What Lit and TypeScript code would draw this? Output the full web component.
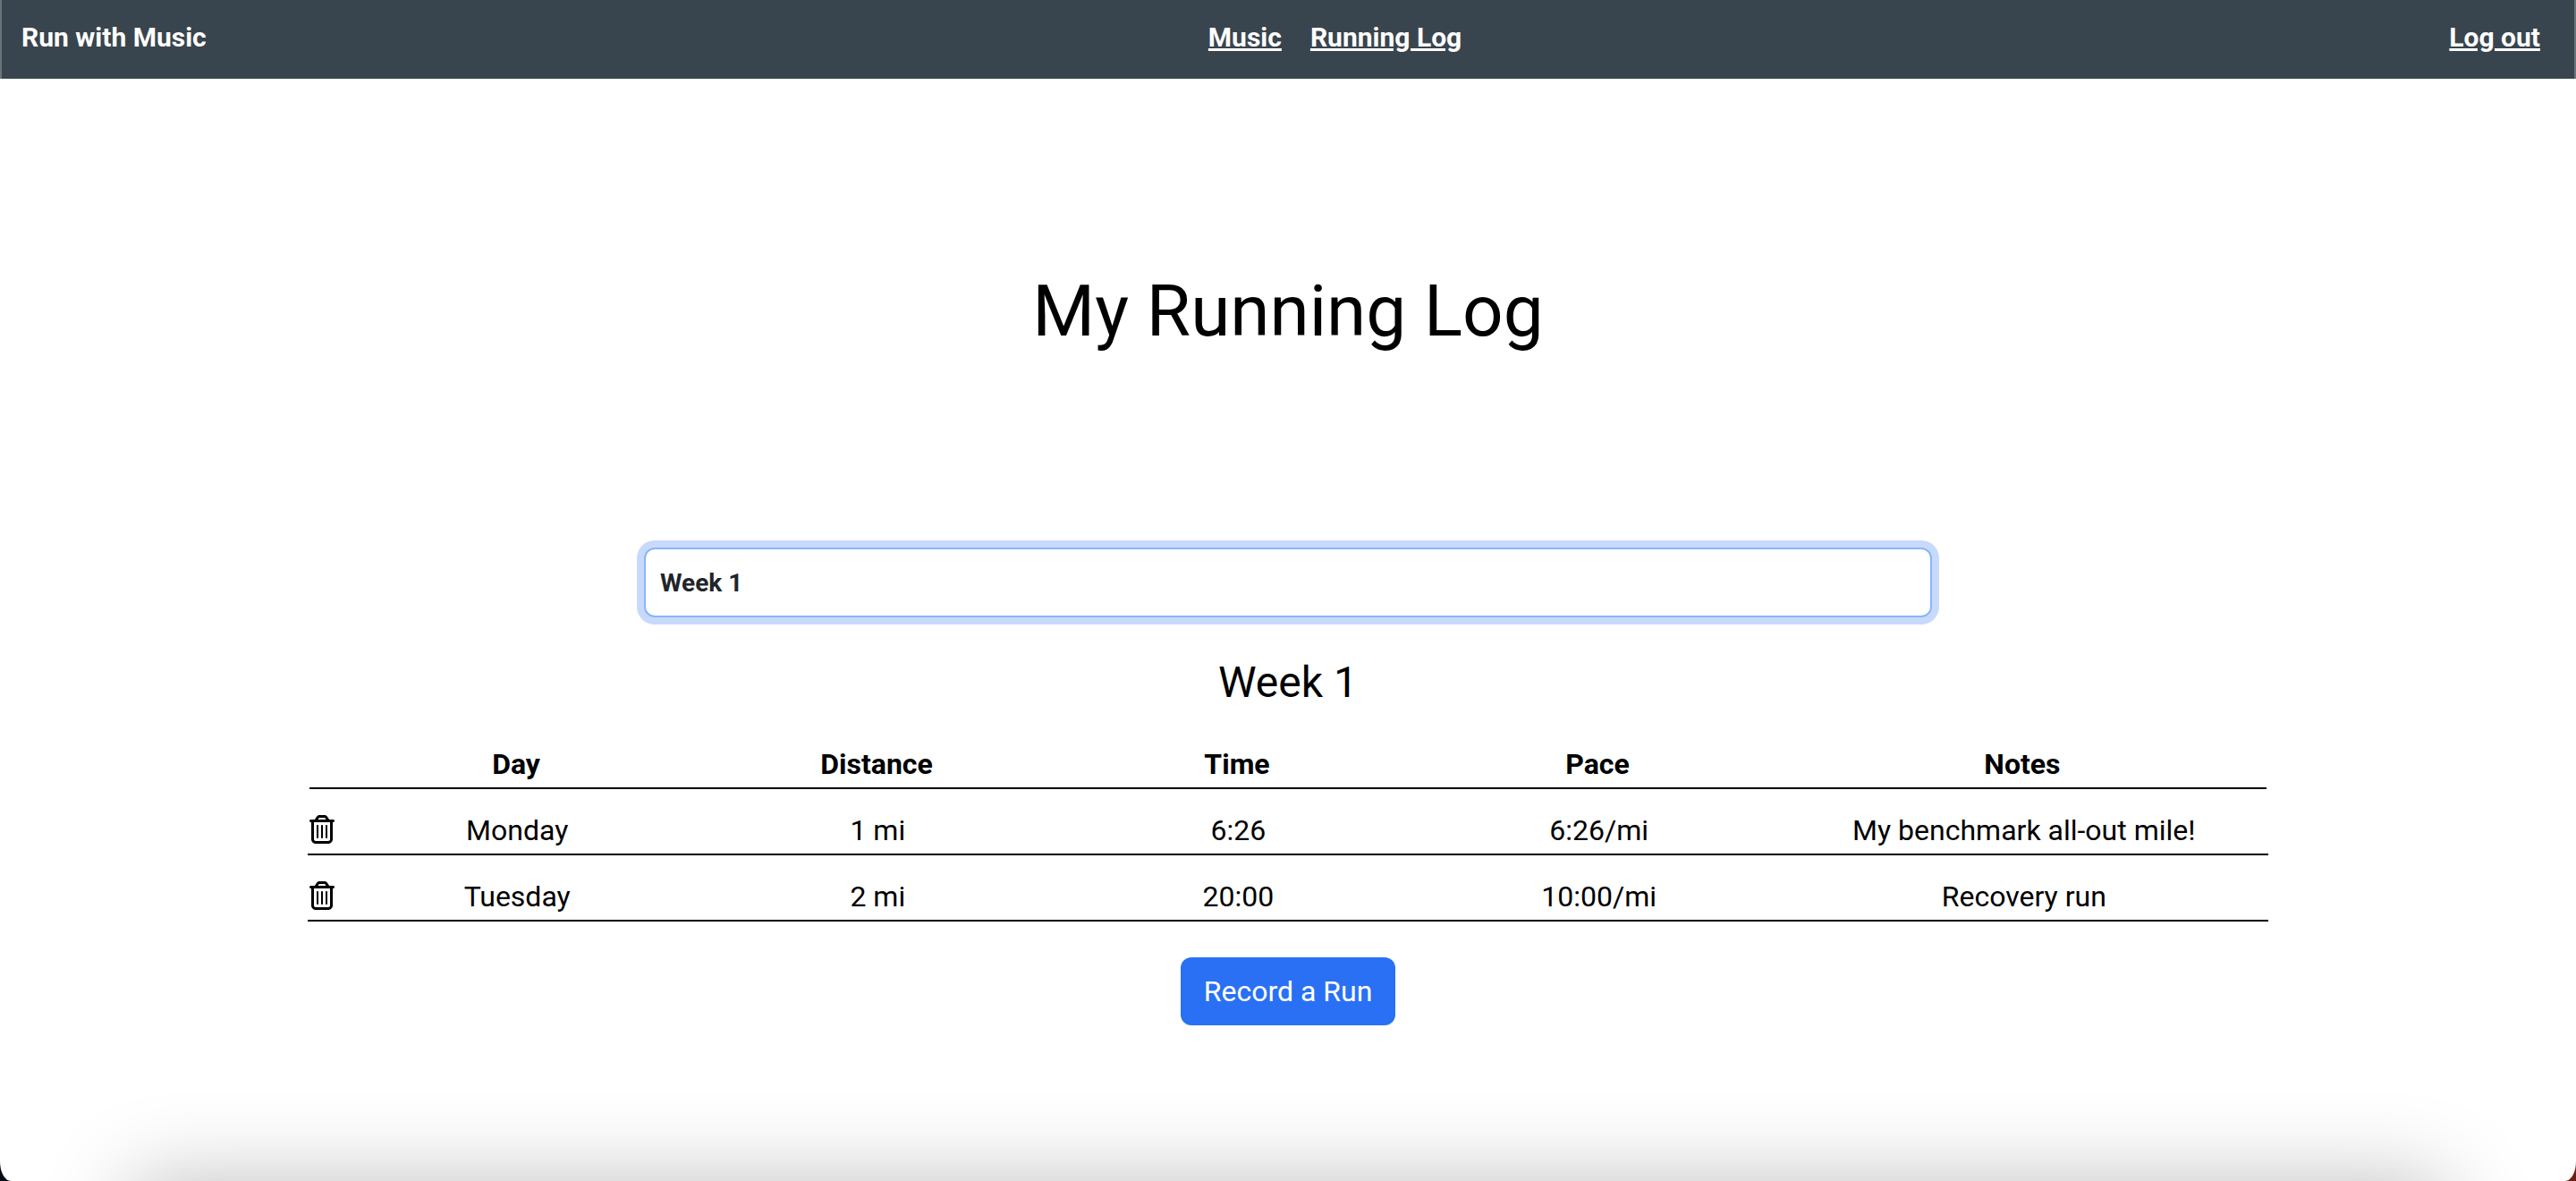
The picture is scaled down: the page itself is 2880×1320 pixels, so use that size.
import { LitElement, html, css } from "lit";
import { customElement, state } from "lit/decorators.js";

interface Run {
  day: string;
  distance: string;
  time: string;
  pace: string;
  notes: string;
}

@customElement("app-header")
class AppHeader extends LitElement {
  static styles = css`
    :host {
      display: block;
    }
    .bar {
      display: flex;
      justify-content: space-between;
      box-sizing: border-box;
      padding: 22px 38px 26px 22px;
      border: solid #6a7479;
      border-width: 0 2px;
      background: #39454e;
      color: #fff;
      font-size: 30px;
      font-weight: 700;
      line-height: 40px;
    }
    .brand {
      margin-right: 16px;
    }
    .links {
      display: flex;
      gap: 32px;
    }
    .link {
      color: inherit;
      text-decoration: underline 3px;
      text-underline-offset: 2px;
    }
  `;

  render() {
    return html`
      <header class="bar">
        <span class="brand">Run with Music</span>
        <nav class="links">
          <a class="link" href="#music">Music</a>
          <a class="link" href="#log">Running Log</a>
        </nav>
        <a class="link" href="#logout">Log out</a>
      </header>
    `;
  }
}

@customElement("run-table")
class RunTable extends LitElement {
  static properties = { runs: { attribute: false } };
  declare runs: Run[];

  static styles = css`
    :host {
      display: block;
    }
    .table,
    .head,
    .body {
      display: block;
    }
    .row {
      display: grid;
      grid-template-columns: 30fr repeat(4, 403fr) 547fr;
      border-bottom: 2px solid #000;
      padding-bottom: 2px;
      font-size: 32px;
      line-height: 48px;
    }
    .body .row {
      grid-template-columns: 33fr repeat(4, 403fr) 547fr;
      margin: 0 -2px;
      padding-top: 22px;
    }
    .cell {
      padding: 0;
      text-align: center;
    }
    .tool {
      padding: 7px 0 0 2px;
      line-height: 0;
      text-align: left;
    }
    .delete {
      display: block;
      padding: 0;
      border: 0;
      background: none;
      color: #000;
      cursor: pointer;
    }
    .icon {
      display: block;
      width: 28px;
      height: 32px;
      fill: currentColor;
    }
  `;

  render() {
    return html`
      <table class="table">
        <thead class="head">
          <tr class="row">
            <td class="cell"></td>
            <th class="cell" scope="col">Day</th>
            <th class="cell" scope="col">Distance</th>
            <th class="cell" scope="col">Time</th>
            <th class="cell" scope="col">Pace</th>
            <th class="cell" scope="col">Notes</th>
          </tr>
        </thead>
        <tbody class="body">
          ${this.runs.map(
            (run) => html`
              <tr class="row">
                <td class="tool">
                  <button class="delete" type="button" aria-label="Delete ${run.day} run">
                    <svg class="icon" viewBox="0 0 448 512" aria-hidden="true">
                      <path
                        d="M170.5 51.6L151.5 80h145l-19-28.4c-1.5-2.2-4-3.6-6.7-3.6H177.1c-2.7 0-5.2 1.3-6.7 3.6zm147-26.6L354.2 80H368h48 8c13.3 0 24 10.7 24 24s-10.7 24-24 24h-8V432c0 44.2-35.8 80-80 80H112c-44.2 0-80-35.8-80-80V128H24c-13.3 0-24-10.7-24-24S10.7 80 24 80h8H80 93.8l36.7-55.1C140.9 9.4 158.4 0 177.1 0h93.7c18.7 0 36.2 9.4 46.6 24.9zM80 128V432c0 17.7 14.3 32 32 32H336c17.7 0 32-14.3 32-32V128H80zm80 64V400c0 8.8-7.2 16-16 16s-16-7.2-16-16V192c0-8.8 7.2-16 16-16s16 7.2 16 16zm80 0V400c0 8.8-7.2 16-16 16s-16-7.2-16-16V192c0-8.8 7.2-16 16-16s16 7.2 16 16zm80 0V400c0 8.8-7.2 16-16 16s-16-7.2-16-16V192c0-8.8 7.2-16 16-16s16 7.2 16 16z"
                      />
                    </svg>
                  </button>
                </td>
                <td class="cell">${run.day}</td>
                <td class="cell">${run.distance}</td>
                <td class="cell">${run.time}</td>
                <td class="cell">${run.pace}</td>
                <td class="cell">${run.notes}</td>
              </tr>
            `
          )}
        </tbody>
      </table>
    `;
  }
}

@customElement("app-root")
class AppRoot extends LitElement {
  @state() private week = "Week 1";

  private runs: Run[] = [
    { day: "Monday", distance: "1 mi", time: "6:26", pace: "6:26/mi", notes: "My benchmark all-out mile!" },
    { day: "Tuesday", distance: "2 mi", time: "20:00", pace: "10:00/mi", notes: "Recovery run" },
  ];

  static styles = css`
    :host {
      display: block;
      background: linear-gradient(90deg, #020b14 50%, #6b1f12 50%);
      color: #000;
      font-family: Roboto, "Liberation Sans", sans-serif;
    }
    .window {
      position: relative;
      overflow: hidden;
      min-height: 100vh;
      border-radius: 0 0 12px 12px / 0 0 22px 22px;
      background: #fff;
    }
    /* Soft shade rising from below the lower edge of the window. */
    .shade {
      position: absolute;
      top: 100%;
      left: 144px;
      right: 144px;
      height: 200px;
      border-radius: 24px;
      box-shadow: 0 0 96px rgba(0, 0, 0, 0.25);
      pointer-events: none;
    }
    .main {
      display: flex;
      flex-direction: column;
      align-items: center;
      padding: 212px 0 64px;
    }
    .title {
      margin: 0 0 216px;
      font-size: 80px;
      font-weight: 400;
      line-height: 96px;
    }
    .week {
      appearance: none;
      box-sizing: border-box;
      width: 50%;
      height: 78px;
      padding: 0 16px;
      border: 2px solid #8ab5fa;
      border-radius: 12px;
      outline: 0;
      box-shadow: 0 0 0 8px #c8dafc;
      background: #fff;
      color: #212529;
      font: inherit;
      font-size: 28px;
      font-weight: 700;
    }
    .subtitle {
      margin: 44px 0 38px;
      font-size: 48px;
      font-weight: 400;
      line-height: 58px;
    }
    .runs {
      width: 76%;
    }
    .record {
      margin-top: 40px;
      padding: 14px 26px;
      border: 0;
      border-radius: 12px;
      background: #2970f5;
      color: #fff;
      font: inherit;
      font-size: 32px;
      line-height: 48px;
      cursor: pointer;
    }
  `;

  render() {
    return html`
      <div class="window">
        <app-header></app-header>
        <main class="main">
          <h1 class="title">My Running Log</h1>
          <select
            class="week"
            aria-label="Week"
            @change=${(e: Event) => (this.week = (e.target as HTMLSelectElement).value)}
          >
            <option>Week 1</option>
          </select>
          <h2 class="subtitle">${this.week}</h2>
          <run-table class="runs" .runs=${this.runs}></run-table>
          <button class="record" type="button">Record a Run</button>
        </main>
        <div class="shade"></div>
      </div>
    `;
  }
}
